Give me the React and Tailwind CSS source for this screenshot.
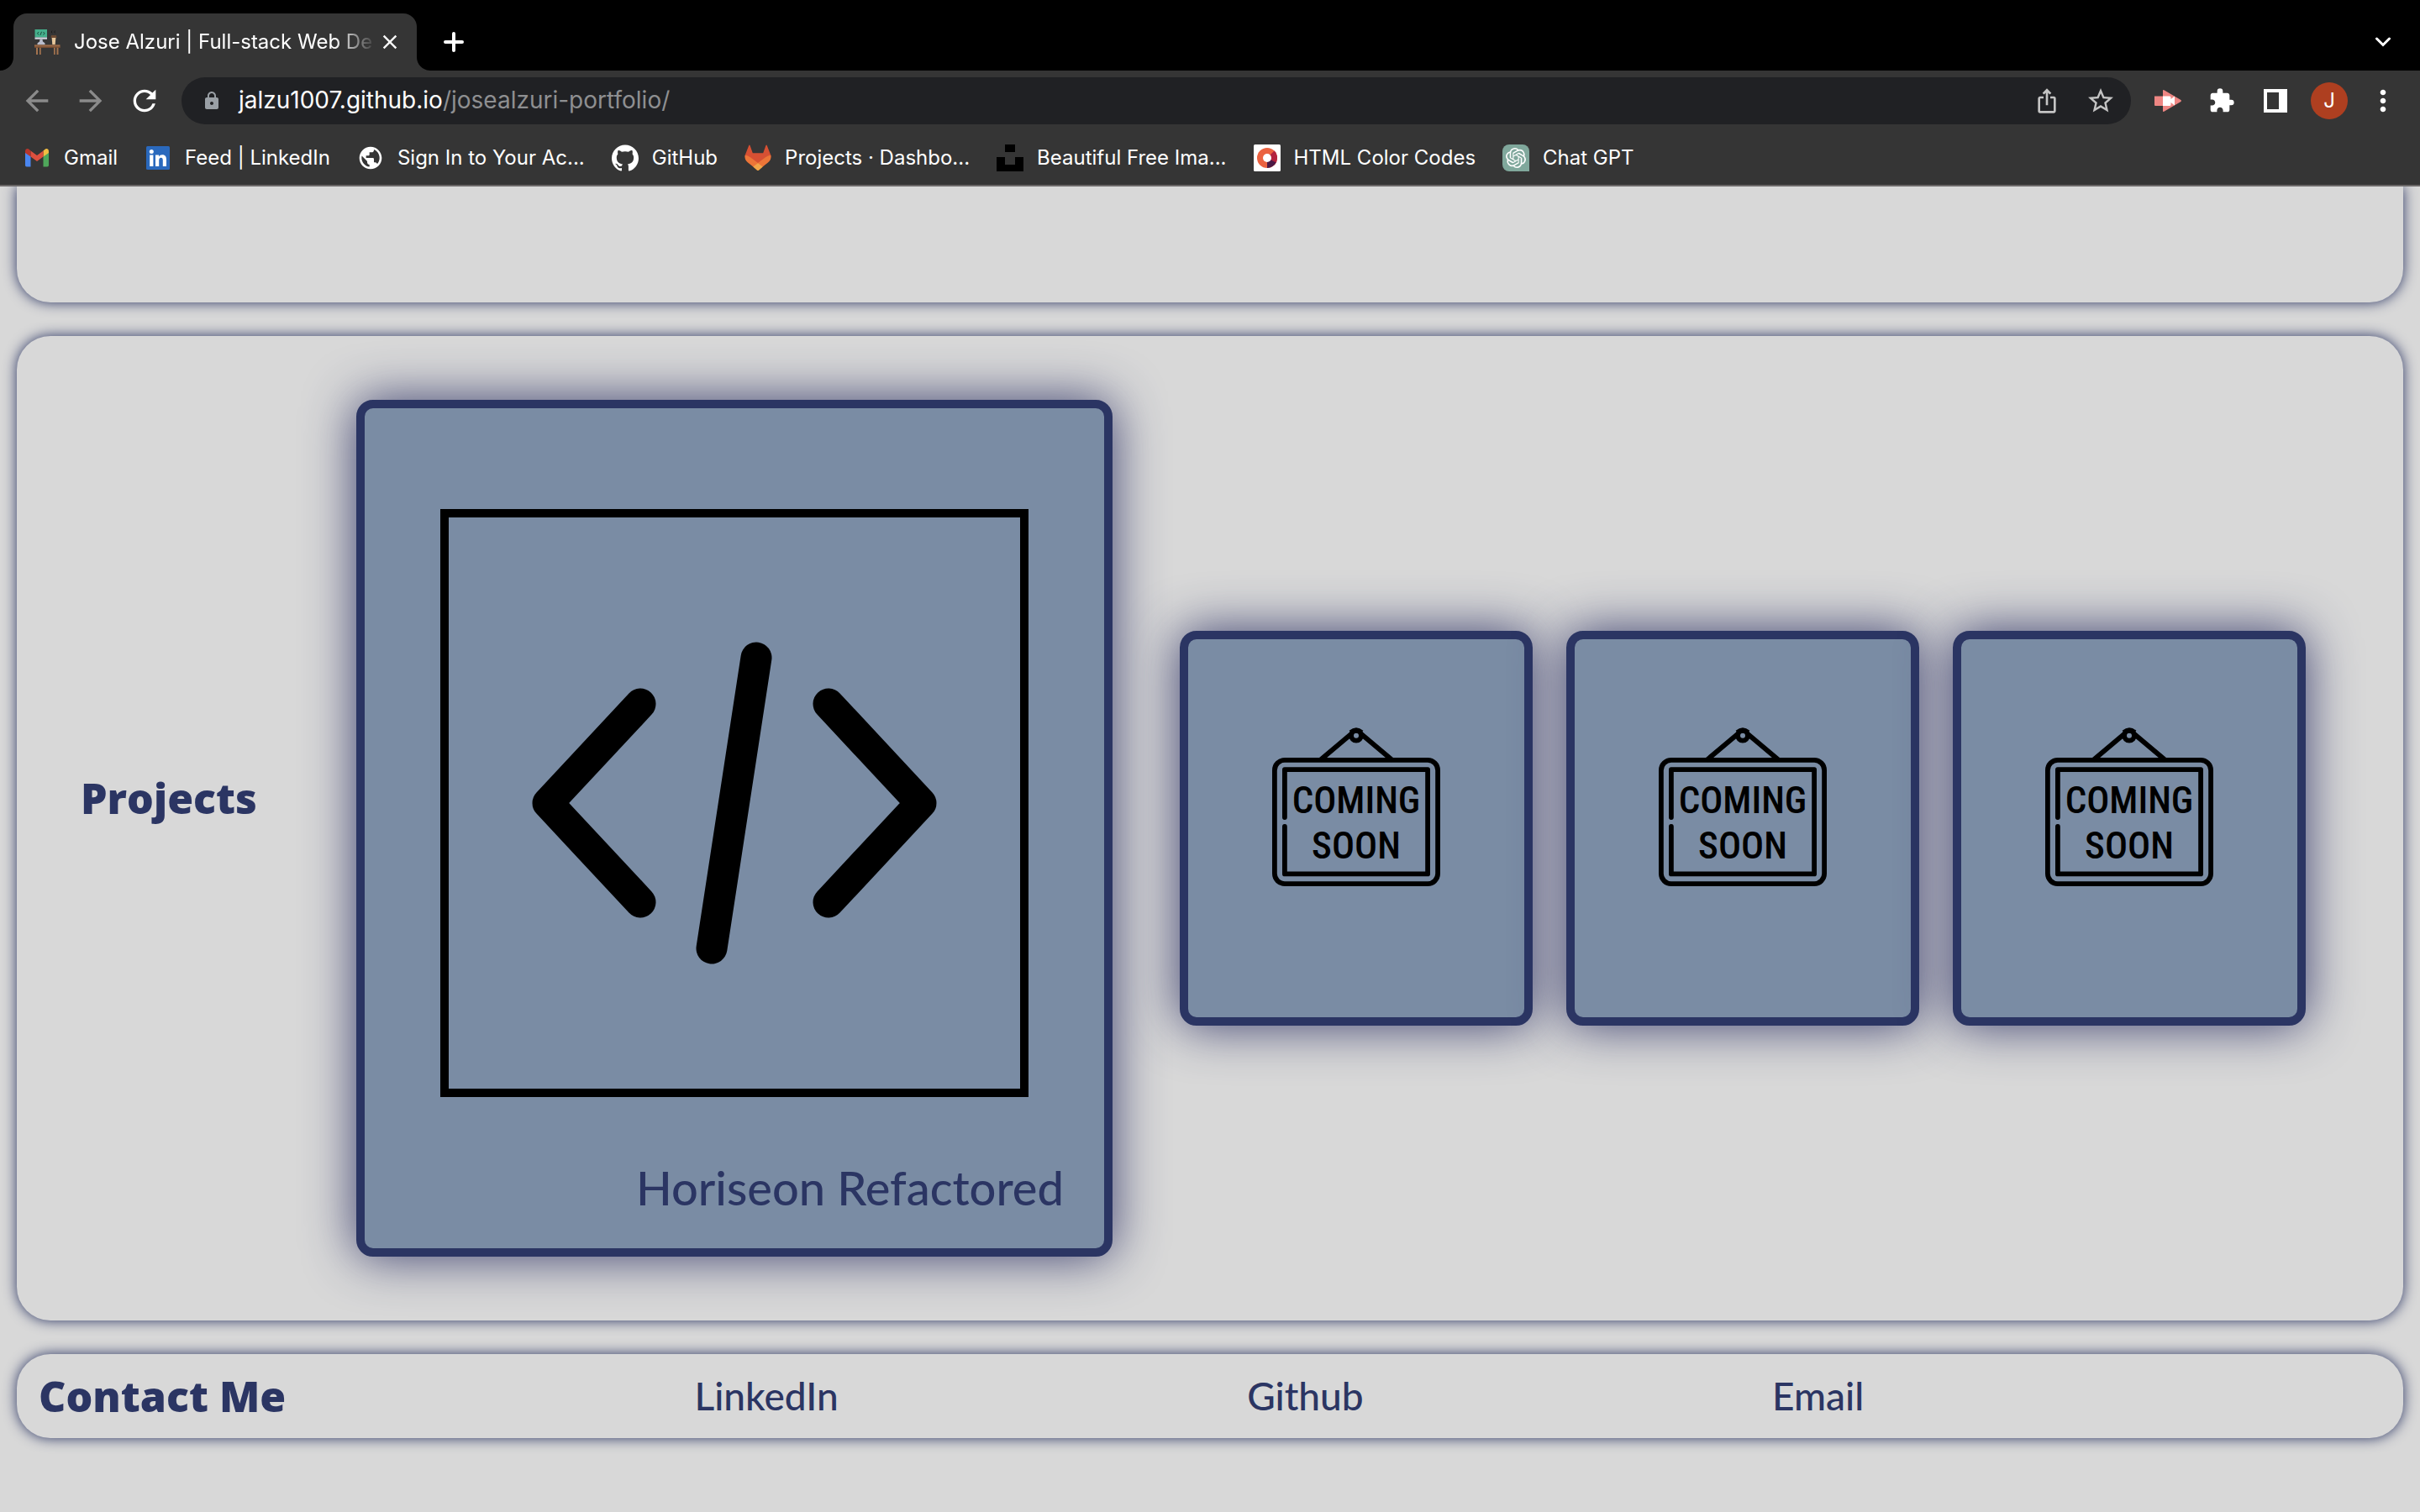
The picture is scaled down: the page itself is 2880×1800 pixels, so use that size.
import React from "react";
import {
  MdArrowBack,
  MdArrowForward,
  MdClose,
  MdExtension,
  MdIosShare,
  MdLock,
  MdMoreVert,
  MdPublic,
  MdRefresh,
  MdStarBorder,
} from "react-icons/md";
import { SiGithub, SiOpenai } from "react-icons/si";

function DeskIcon() {
  return (
    <svg viewBox="0 0 32 32" className="size-8 shrink-0" aria-hidden="true">
      <rect x="1.5" y="1" width="14.5" height="9.5" fill="#45b08c" />
      <path d="M6 4 4.5 5.8 6 7.5M11.5 4 13 5.8 11.5 7.5M9.5 3.8 8 7.8" fill="none" stroke="#1c4a3c" strokeWidth="1" />
      <rect x="1.5" y="10.5" width="14.5" height="2.2" fill="#d5d8e2" />
      <path d="M7.5 12.7h3l.6 3.6h-4.2zM4.5 17.5l2-1.8h5l2 1.8v1.8h-9z" fill="#b9bdcc" />
      <path d="M22 5.5q-1.500-1.500 0-3M25.500 5.500q-1.500-1.500 0-3" fill="none" stroke="#1d1d1d" strokeWidth="1" />
      <path d="M21.500 9.500h5l-.8 9.500h-3.400z" fill="#e6c69a" />
      <path d="M21 8h6l.5 3h-7z" fill="#6b4a33" />
      <rect x="1" y="19.300" width="30.500" height="3.500" fill="#9b6a48" />
      <path d="M1 21.500h30.500v1.300H1z" fill="#6d472f" />
      <path d="M3 22.800h2V31H3zM7 22.800h1.700V31H7zM24 22.800h1.700V31H24zM27.500 22.800h2V31h-2z" fill="#a3734f" />
    </svg>
  );
}

function GmailIcon() {
  return (
    <svg viewBox="0 0 32 32" className="size-8" aria-hidden="true">
      <path d="M2 9v15.500A1.800 1.800 0 0 0 3.800 26.500H8.500V13.800z" fill="#4a86f0" />
      <path d="M30 9v15.500a1.800 1.800 0 0 1-1.800 2H23.500V13.800z" fill="#4fa75b" />
      <path d="M23.500 7.500v7L30 10V8.200c0-3-2.700-4-4.800-2.300z" fill="#f2bd42" />
      <path d="M8.500 14.500v-7L16 13l7.500-5.500v7L16 20z" fill="#dd4f3e" />
      <path d="M2 8.200V10l6.500 4.500v-7L6.800 5.900C4.700 4.200 2 5.200 2 8.200z" fill="#b6362d" />
    </svg>
  );
}

function LinkedInIcon() {
  return (
    <svg viewBox="0 0 32 32" className="size-8" aria-hidden="true">
      <rect x="2" y="2" width="28" height="28" rx="1.500" fill="#2a69bd" />
      <circle cx="8.300" cy="8.400" r="2.500" fill="#fff" />
      <path
        d="M6.200 12.500h4.200V26H6.200zM13 12.500h4v1.900c.9-1.400 2.300-2.200 4.100-2.200 3.900 0 4.900 2.400 4.900 6.100V26h-4.200v-6.900c0-1.800-.3-3.300-2.200-3.300-1.800 0-2.400 1.300-2.400 3.200v7H13z"
        fill="#fff"
      />
    </svg>
  );
}

function GitlabIcon() {
  return (
    <svg viewBox="0 0 32 32" className="size-8" aria-hidden="true">
      <path d="M5.200 1.200q.6-1.300 1.400 0L9.800 10.200h12.400L25.400 1.200q.8-1.300 1.400 0L31.200 12.500q1 3.500-2 6.800L16 28 2.800 19.300q-3-3.300-2-6.800z" fill="#d65033" />
      <path d="M.8 12.800Q-.4 18 4 21.500L16 31 28 21.500q4.400-3.500 3.200-8.700Q28 13 25 15.300L16 22 7 15.300Q4 13 .8 12.800z" fill="#ec7538" />
      <path d="M16 22.300 10.300 26.500 15 30.700q1 .8 2 0L21.700 26.500z" fill="#f1a548" />
    </svg>
  );
}

function UnsplashIcon() {
  return (
    <svg viewBox="0 0 32 32" className="size-8" aria-hidden="true">
      <path d="M10 0h12v9H10zM0 15h10v9h12v-9h10v17H0z" fill="#000" />
    </svg>
  );
}

function ColorCodesIcon() {
  return (
    <svg viewBox="0 0 32 32" className="size-8" aria-hidden="true">
      <rect width="32" height="32" rx="1.500" fill="#fff" />
      <circle cx="16" cy="16" r="12" fill="#eb6240" />
      <path d="M16 16 24.500 7.500A12 12 0 0 1 24.500 24.500z" fill="#b3233f" />
      <path d="M16 16 26.500 21.500A12 12 0 0 1 16 28z" fill="#4b1a45" />
      <circle cx="16" cy="16" r="5" fill="#fff" />
    </svg>
  );
}

function ChatGptIcon() {
  return (
    <span className="flex size-8 items-center justify-center rounded-l-lg rounded-tr-lg bg-[#80a89c] text-white">
      <SiOpenai className="size-6" />
    </span>
  );
}

function RecorderIcon() {
  return (
    <svg viewBox="0 0 32 32" className="size-8" aria-hidden="true">
      <path d="M0 10.500h10V4q0-1.600 1.400-.8L31.400 15q1 1 0 2L11.400 28.800Q10 29.600 10 28v-6H1q-1 0-1-1z" fill="#ee8683" />
      <path d="M10 10.500h8q1.500 0 1.500 1.500v2l4.500-3.500v11L19.500 18v2.500q0 1.500-1.500 1.500h-8z" fill="#fff" />
    </svg>
  );
}

function SidePanelIcon() {
  return (
    <svg viewBox="0 0 28 28" className="size-7" aria-hidden="true">
      <path d="M0 0h28v28H0zM4 4v20h14V4z" fill="#fff" fillRule="evenodd" />
    </svg>
  );
}

function CodeIcon() {
  return (
    <svg
      viewBox="0 0 700 700"
      className="block aspect-square w-full"
      fill="none"
      stroke="#000"
      strokeWidth="37"
      strokeLinecap="round"
      strokeLinejoin="round"
      role="img"
      aria-label="Code brackets"
    >
      <rect x="5" y="5" width="690" height="690" strokeWidth="10" strokeLinejoin="miter" />
      <path d="M238 232 128 350l110 118M462 232l110 118-110 118M376 177 323 523" />
    </svg>
  );
}

function ComingSoonSign() {
  return (
    <svg viewBox="0 0 200 200" className="size-[200px]" role="img" aria-label="Coming soon sign">
      <g fill="none" stroke="#000" strokeWidth="5.800">
        <path d="M57 44 95 12M143 44 105 12" />
        <path d="M93.500 11q6.500-5.500 13 0" />
        <circle cx="100" cy="14.700" r="5.900" />
        <rect x="2.900" y="43.900" width="194.200" height="147.200" rx="12" />
        <path d="M14.900 112V55.200H185.100V179.400H14.900V123" strokeLinecap="round" strokeLinejoin="round" />
      </g>
      <g
        textAnchor="middle"
        fill="#000"
        className="font-['Roboto_Condensed','Liberation_Sans_Narrow',sans-serif] text-[45px] font-medium"
      >
        <text x="100" y="107">COMING</text>
        <text x="100" y="161">SOON</text>
      </g>
    </svg>
  );
}

const bookmarks = [
  { label: "Gmail", icon: <GmailIcon /> },
  { label: "Feed | LinkedIn", icon: <LinkedInIcon /> },
  { label: "Sign In to Your Ac...", icon: <MdPublic className="size-8" /> },
  { label: "GitHub", icon: <SiGithub className="size-8" /> },
  { label: "Projects · Dashbo...", icon: <GitlabIcon /> },
  { label: "Beautiful Free Ima...", icon: <UnsplashIcon /> },
  { label: "HTML Color Codes", icon: <ColorCodesIcon /> },
  { label: "Chat GPT", icon: <ChatGptIcon /> },
];

const contacts = ["LinkedIn", "Github", "Email"];

function ToolButton({ label, children, className = "" }) {
  return (
    <button type="button" aria-label={label} className={`flex h-14 w-16 shrink-0 items-center justify-center ${className}`}>
      {children}
    </button>
  );
}

function BrowserChrome() {
  return (
    <header className="relative z-10 border-b-2 border-[#6b6868] bg-[#353535] font-[Inter,sans-serif] text-2xl text-white">
      <div className="flex h-[84px] items-end bg-black">
        <svg viewBox="0 0 16 16" className="size-4" aria-hidden="true">
          <path d="M16 0v16H0A16 16 0 0 0 16 0z" fill="#353535" />
        </svg>
        <div className="flex h-[68px] w-[480px] items-center rounded-t-2xl bg-[#353535] pl-6">
          <DeskIcon />
          <span className="ml-4 w-[360px] whitespace-nowrap [mask-image:linear-gradient(to_right,black_86%,transparent)]">
            Jose Alzuri | Full-stack Web De
          </span>
          <button type="button" aria-label="Close tab" className="ml-0.5">
            <MdClose className="size-7" />
          </button>
        </div>
        <svg viewBox="0 0 16 16" className="size-4" aria-hidden="true">
          <path d="M0 0v16h16A16 16 0 0 1 0 0z" fill="#353535" />
        </svg>
        <button type="button" aria-label="New tab" className="flex h-[68px] w-14 items-center justify-center">
          <svg viewBox="0 0 24 24" className="size-6" stroke="#fff" strokeWidth="4" strokeLinecap="round" aria-hidden="true">
            <path d="M12 2v20M2 12h20" />
          </svg>
        </button>
        <button type="button" aria-label="Search tabs" className="mr-3 ml-auto flex h-[68px] w-16 items-center justify-center">
          <svg viewBox="0 0 18 12" className="h-3 w-[18px]" fill="none" stroke="#fff" strokeWidth="3" strokeLinecap="round" aria-hidden="true">
            <path d="m1.500 2 7.500 7.500L16.500 2" />
          </svg>
        </button>
      </div>

      <div className="flex h-[72px] items-center px-3">
        <ToolButton label="Back" className="text-[#8b8b8b]">
          <MdArrowBack className="size-10" />
        </ToolButton>
        <ToolButton label="Forward" className="text-[#8b8b8b]">
          <MdArrowForward className="size-10" />
        </ToolButton>
        <ToolButton label="Reload">
          <MdRefresh className="size-10" />
        </ToolButton>
        <div className="mx-3 flex h-14 flex-1 items-center rounded-full bg-[#202124] pr-1 pl-6">
          <MdLock className="size-6 text-[#9aa0a6]" />
          <div
            role="textbox"
            aria-label="Address"
            contentEditable
            suppressContentEditableWarning
            spellCheck={false}
            className="ml-5 flex-1 text-[28px] whitespace-nowrap"
          >
            jalzu1007.github.io<span className="text-[#8e8f91]">/josealzuri-portfolio/</span>
          </div>
          <ToolButton label="Share" className="text-[#c4c4c4]">
            <MdIosShare className="size-8" />
          </ToolButton>
          <ToolButton label="Bookmark this tab" className="text-[#c4c4c4]">
            <MdStarBorder className="size-9" />
          </ToolButton>
        </div>
        <ToolButton label="Screen recorder">
          <RecorderIcon />
        </ToolButton>
        <ToolButton label="Extensions">
          <MdExtension className="size-8" />
        </ToolButton>
        <ToolButton label="Side panel">
          <SidePanelIcon />
        </ToolButton>
        <ToolButton label="Profile">
          <span className="flex size-11 items-center justify-center rounded-full bg-[#ae3f20]">J</span>
        </ToolButton>
        <ToolButton label="Menu">
          <MdMoreVert className="size-10" />
        </ToolButton>
      </div>

      <nav aria-label="Bookmarks" className="flex h-16 items-center gap-8 pl-7">
        {bookmarks.map(({ label, icon }) => (
          <a key={label} href="#" className="flex items-center gap-4 whitespace-nowrap">
            {icon}
            {label}
          </a>
        ))}
      </nav>
    </header>
  );
}

export default function App() {
  return (
    <div className="min-h-screen bg-[#d8d8d8] text-[#2b3563]">
      <BrowserChrome />
      <main className="flex flex-col gap-10 px-5">
        <section aria-label="About" className="h-[138px] rounded-b-[40px] shadow-[0_0_16px_#2b3563]" />

        <section className="flex items-center rounded-[40px] py-[76px] pr-[116px] pl-[76px] shadow-[0_0_16px_#2b3563]">
          <h2 className="mb-18 w-[328px] shrink-0 font-['Open_Sans',sans-serif] text-[50px] leading-none font-extrabold">Projects</h2>
          <div className="grid flex-1 grid-cols-[940fr_420fr_420fr_420fr] items-center gap-10">
            <a
              href="#"
              className="mr-10 block rounded-[20px] border-[10px] border-[#2b3563] bg-[#7a8ca4] pt-[120px] pb-9 shadow-[0_0_60px_#2b3063e6]"
            >
              <div className="px-[90px]">
                <CodeIcon />
              </div>
              <h3 className="mt-18 pr-12 text-right font-[Lato,sans-serif] text-[56px] leading-[72px] font-medium">
                Horiseon Refactored
              </h3>
            </a>
            {[1, 2, 3].map((slot) => (
              <article
                key={slot}
                className="flex aspect-[420/470] justify-center rounded-[20px] border-[10px] border-[#2b3563] bg-[#7a8ca4] pt-[100px] shadow-[0_0_60px_#2b3063e6]"
              >
                <ComingSoonSign />
              </article>
            ))}
          </div>
        </section>

        <footer className="flex h-[100px] items-center justify-between rounded-[40px] pr-[22.6%] pl-[26px] shadow-[0_0_16px_#2b3563]">
          <h2 className="font-['Open_Sans',sans-serif] text-[50px] leading-none font-extrabold">Contact Me</h2>
          {contacts.map((name) => (
            <a key={name} href="#" className="font-[Lato,sans-serif] text-[46px] leading-none font-medium">
              {name}
            </a>
          ))}
        </footer>
      </main>
    </div>
  );
}
